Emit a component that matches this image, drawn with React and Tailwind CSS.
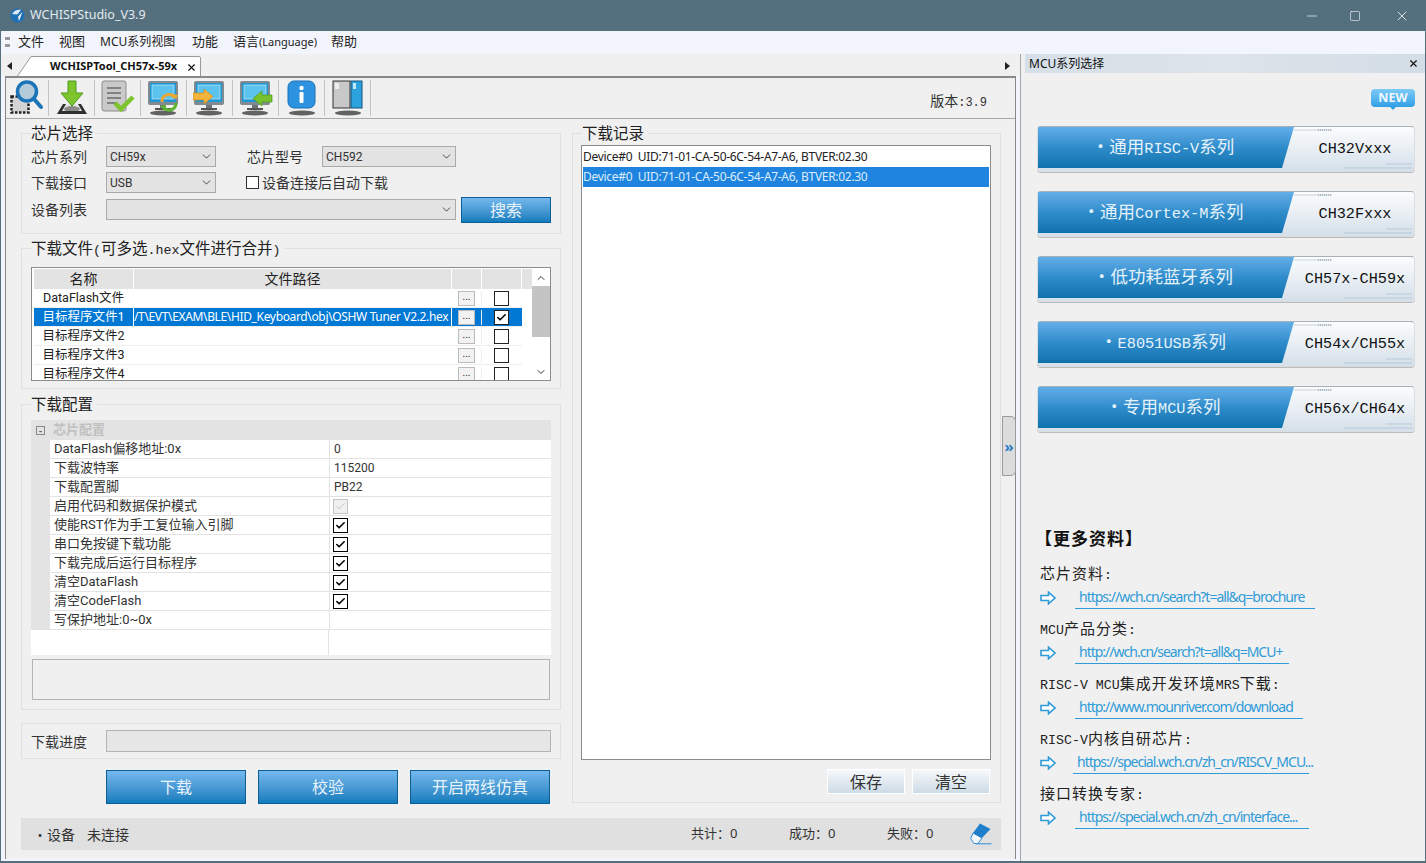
import { ChevronDown, ChevronUp, Check, X, Minus, Square } from "lucide-react";

const FONT = "[font-family:'Noto_Sans','Noto_Sans_CJK_SC',sans-serif]";
const MONO = "[font-family:'Liberation_Mono','Noto_Sans_CJK_SC',monospace]";
const GRID = "[font-family:'Roboto','Noto_Sans_CJK_SC',sans-serif]";

const menus = [
  { label: "文件", cls: "w-[41px] text-[13px]" },
  { label: "视图", cls: "w-[41px] text-[13px]" },
  { label: "MCU系列视图", cls: "w-[92px] text-[12px]" },
  { label: "功能", cls: "w-[41px] text-[13px]" },
];

const series = [
  { name: "通用RISC-V系列", code: "CH32Vxxx" },
  { name: "通用Cortex-M系列", code: "CH32Fxxx" },
  { name: "低功耗蓝牙系列", code: "CH57x-CH59x" },
  { name: "E8051USB系列", code: "CH54x/CH55x" },
  { name: "专用MCU系列", code: "CH56x/CH64x" },
];

const links = [
  { label: "芯片资料:", url: "https://wch.cn/search?t=all&q=brochure", w: "w-[240px]", ml: "ml-[19px]" },
  { label: "MCU产品分类:", url: "http://wch.cn/search?t=all&q=MCU+", w: "w-[214px]", ml: "ml-[19px]" },
  { label: "RISC-V MCU集成开发环境MRS下载:", url: "http://www.mounriver.com/download", w: "w-[228px]", ml: "ml-[19px]" },
  { label: "RISC-V内核自研芯片:", url: "https://special.wch.cn/zh_cn/RISCV_MCU...", w: "w-[236px]", ml: "ml-[17px]" },
  { label: "接口转换专家:", url: "https://special.wch.cn/zh_cn/interface...", w: "w-[234px]", ml: "ml-[19px]" },
];

const fileRows = [
  { name: "DataFlash文件", path: "" },
  { name: "目标程序文件1", path: "/T\\EVT\\EXAM\\BLE\\HID_Keyboard\\obj\\OSHW Tuner V2.2.hex", selected: true, checked: true },
  { name: "目标程序文件2", path: "" },
  { name: "目标程序文件3", path: "" },
  { name: "目标程序文件4", path: "" },
];

const configRows = [
  { name: "DataFlash偏移地址:0x", value: "0" },
  { name: "下载波特率", value: "115200" },
  { name: "下载配置脚", value: "PB22" },
  { name: "启用代码和数据保护模式", check: "disabled" },
  { name: "使能RST作为手工复位输入引脚", check: "on" },
  { name: "串口免按键下载功能", check: "on" },
  { name: "下载完成后运行目标程序", check: "on" },
  { name: "清空DataFlash", check: "on" },
  { name: "清空CodeFlash", check: "on" },
  { name: "写保护地址:0~0x", value: "" },
];

// the app draws latin in half-width mono next to the chinese, so split the runs
function Mixed({ text, latin }) {
  return text.split(/([\x20-\x7e]+)/).map((part, i) =>
    i % 2 === 1 ? <span key={i} className={`${MONO} ${latin}`}>{part}</span> : part
  );
}

function Group({ title, className, children }) {
  return (
    <div className={`relative border border-[#e0e0e0] ${className}`}>
      {title && (
        <span className="absolute left-[9px] top-[-10px] whitespace-pre bg-[#f0f0f0] pr-1 text-[15.5px] leading-[19px] text-[#222]">
          <Mixed text={title} latin="text-[13.3px]" />
        </span>
      )}
      {children}
    </div>
  );
}

function Select({ value, className }) {
  return (
    <div className={`flex h-[21px] items-center justify-between border border-[#a9a9a9] bg-[#e3e3e3] pl-[3px] pr-[2px] text-[12px] text-[#333] ${GRID} ${className}`}>
      <span>{value}</span>
      <ChevronDown size={13} strokeWidth={1.6} className="text-[#333]" />
    </div>
  );
}

function Checkbox({ checked, disabled, className = "" }) {
  return (
    <span className={`flex h-[15px] w-[15px] shrink-0 items-center justify-center border ${disabled ? "border-[#c4c4c4] bg-[#f0f0f0]" : "border-black bg-white"} ${className}`}>
      {checked && <Check size={11} strokeWidth={disabled ? 2 : 3.5} className={disabled ? "text-[#c0c0c0]" : "text-black"} />}
    </span>
  );
}

function BlueButton({ children, className }) {
  return (
    <button className={`border border-[#0b5f96] bg-gradient-to-b from-[#74b9ee] to-[#0f7cbc] text-[16px] text-[#e8f4fc] ${className}`}>
      {children}
    </button>
  );
}

function LightButton({ children }) {
  return (
    <button className="h-[25px] w-[78px] border border-white bg-gradient-to-b from-[#f6f8fa] to-[#cddbe6] text-[16px] text-[#333]">
      {children}
    </button>
  );
}

function Monitor({ children }) {
  return (
    <svg width="34" height="36" viewBox="0 0 34 36">
      <ellipse cx="16" cy="33" rx="13" ry="2.5" fill="#333" opacity=".75" />
      <rect x="1" y="1" width="30" height="24" rx="2" fill="#808a90" />
      <rect x="3" y="3" width="26" height="19" fill="#1f97d2" />
      <rect x="5" y="5" width="22" height="14" fill="#5cc3ee" stroke="#d8f2fc" strokeWidth=".6" />
      <rect x="13" y="25" width="6" height="3" fill="#6d7377" />
      <rect x="8" y="28" width="16" height="2" fill="#555" />
      {children}
    </svg>
  );
}

function ToolIcon({ type }) {
  if (type === "scan") {
    return (
      <svg width="34" height="36" viewBox="0 0 34 36">
        <rect x="1.5" y="16.5" width="17" height="16" fill="#d4d4d4" stroke="#222" strokeWidth="2.5" strokeDasharray="2.5 1.5" />
        <circle cx="17" cy="11.5" r="9.5" fill="#b4cbd9" stroke="#1b74b8" strokeWidth="3.5" />
        <path d="M24 19 L31 27" stroke="#1b74b8" strokeWidth="4" strokeLinecap="round" />
      </svg>
    );
  }
  if (type === "download") {
    return (
      <svg width="32" height="36" viewBox="0 0 32 36">
        <path d="M7 24 H25 L30 33 H2 Z" fill="#e8e8e8" />
        <ellipse cx="16" cy="29" rx="8" ry="3" fill="#8a8a8a" />
        <path d="M7 24 L1 34 H31 L25 24 H22 L26 31 H6 L10 24 Z" fill="#2f2f2f" />
        <path d="M12 1 H20 V13 H27 L16 26 L5 13 H12 Z" fill="#7cc52c" stroke="#4f9a1a" />
      </svg>
    );
  }
  if (type === "verify") {
    return (
      <svg width="34" height="36" viewBox="0 0 34 36">
        <rect x="1" y="1" width="24" height="30" rx="2" fill="#c9c9c9" stroke="#8d8d8d" />
        <path d="M6 8 H20 M6 13 H20 M6 18 H20 M6 23 H16" stroke="#6b6b6b" strokeWidth="1.5" />
        <path d="M14 23 L20 29 L32 17" fill="none" stroke="#7cc52c" strokeWidth="4.5" />
      </svg>
    );
  }
  if (type === "sync") {
    return (
      <Monitor>
        <path d="M15 22 A7 7 0 0 1 28 18" fill="none" stroke="#eda632" strokeWidth="3" />
        <path d="M29 23 A7 7 0 0 1 17 28" fill="none" stroke="#5cb531" strokeWidth="3" />
        <path d="M13 26 L18 31 L19 25 Z" fill="#5cb531" />
        <path d="M31 15 L26 14 L29 20 Z" fill="#eda632" />
      </Monitor>
    );
  }
  if (type === "in") {
    return (
      <Monitor>
        <path d="M0 13 H11 V9 L20 16.5 L11 24 V20 H0 Z" fill="#f3b43c" stroke="#c98a1c" strokeWidth=".7" />
      </Monitor>
    );
  }
  if (type === "out") {
    return (
      <Monitor>
        <path d="M33 15 H23 V11 L14 18.5 L23 26 V22 H33 Z" fill="#77c22c" stroke="#4f9a1a" strokeWidth=".7" />
      </Monitor>
    );
  }
  if (type === "info") {
    return (
      <svg width="30" height="36" viewBox="0 0 30 36">
        <ellipse cx="15" cy="33" rx="13" ry="2.5" fill="#333" opacity=".75" />
        <rect x="1" y="1" width="27" height="27" rx="6" fill="#2d93e0" stroke="#1a6fb3" />
        <circle cx="14.5" cy="8" r="2.2" fill="#fff" />
        <rect x="12.5" y="12" width="4" height="11" rx="1" fill="#fff" />
      </svg>
    );
  }
  return (
    <svg width="32" height="36" viewBox="0 0 32 36">
      <ellipse cx="16" cy="33" rx="13" ry="2.5" fill="#333" opacity=".75" />
      <rect x="1" y="1" width="17" height="27" fill="#c8c8c8" stroke="#333" />
      <rect x="3" y="3" width="4" height="6" fill="#eee" />
      <rect x="19" y="1" width="11" height="27" fill="#2ba2de" stroke="#17557f" />
      <rect x="21" y="3" width="3" height="6" fill="#bfe8fa" />
    </svg>
  );
}

function ArrowIcon() {
  return (
    <svg width="16" height="14" viewBox="0 0 16 14" className="mb-[4px] shrink-0">
      <path d="M1 4.5 H8.5 V1.2 L15 7 L8.5 12.8 V9.5 H1 Z" fill="#fff" stroke="#2f9bd8" strokeWidth="1.6" />
    </svg>
  );
}

function SeriesCard({ name, code }) {
  return (
    <div className="relative flex h-[46px] rounded-[4px] border border-[#d8dde2] border-t-[#a9b1b8] bg-gradient-to-b from-[#fbfcfd] to-[#d5e0ea] shadow-[0_1px_0_#bbb]">
      <div className="h-[41px] w-[256px] shrink-0 whitespace-nowrap bg-gradient-to-b from-[#62aee8] via-[#2f8ccb] to-[#0d72ad] pr-[6px] text-center [clip-path:polygon(0_0,100%_0,244px_100%,0_100%)]">
        <span className="text-[17.5px] leading-[38px] text-[#e6f3fb]">
          ・<Mixed text={name} latin="text-[15.3px]" />
        </span>
      </div>
      <div className={`flex-1 pl-[2px] pt-[10px] text-center text-[15.2px] leading-[24px] text-[#111] ${MONO}`}>{code}</div>
      {/* circuit traces printed on the white end of the button */}
      <svg width="120" height="44" viewBox="0 0 120 44" className="absolute right-0 top-0">
        <path d="M0 3 H38" stroke="#c6d3dd" />
        <path d="M24 3 H38" stroke="#aebcc8" strokeDasharray="1 1" strokeWidth="2" />
        <path d="M50 41 H118 M92 37 H118" stroke="#b5c9d8" />
      </svg>
    </div>
  );
}

export default function App() {
  return (
    <div className={`flex h-[863px] w-[1426px] flex-col overflow-hidden bg-[#54707f] text-[#222] ${FONT}`}>
      {/* title bar */}
      <div className="flex h-[31px] shrink-0 items-center pl-[10px] text-white">
        <svg width="15" height="15" viewBox="0 0 15 15">
          <circle cx="7.5" cy="7.5" r="7" fill="#1f6fb5" />
          <path d="M2 6 Q5 0.8 11 1.8 Q9 5 7 6.5 Z" fill="#dbe9f4" />
          <path d="M9.5 7 L12.5 4 L9 13 L8 9 Z" fill="#eef3f7" />
        </svg>
        <span className="ml-[5px] text-[12.5px] text-[#e4eaee]">WCHISPStudio_V3.9</span>
        <div className="ml-auto flex items-center text-white">
          <Minus size={16} strokeWidth={1} className="mr-[29px]" />
          <Square size={12} strokeWidth={1.2} className="mr-[33px]" />
          <X size={16} strokeWidth={1.2} className="mr-[16px]" />
        </div>
      </div>

      {/* menu bar */}
      <div className="mx-[1px] flex h-[23px] shrink-0 items-center bg-[#f3f5fc] pb-[1px] text-[#222]">
        <span className="ml-[4px] mr-[11px] h-[10px] w-[2px] border-y-[3px] border-dotted border-[#999]" />
        {menus.map((m) => (
          <span key={m.label} className={m.cls}>{m.label}</span>
        ))}
        <span className="w-[98px] text-[13px]">语言<span className="text-[11px]">(Language)</span></span>
        <span className="text-[13px]">帮助</span>
      </div>

      <div className="mx-[1px] mb-[2px] flex min-h-0 flex-1 bg-[#f3f5fc]">
        {/* left pane */}
        <div className="relative w-[1020px] shrink-0 border-r border-[#a0a7ad]">
          {/* tab strip */}
          <div className="flex h-[22px] items-end bg-[#f0f0f0] pl-[6px] pr-[10px]">
            <span className="mb-[6px] h-0 w-0 border-y-[4px] border-r-[5px] border-y-transparent border-r-[#222]" />
            <div className="relative ml-[5px] h-[20px] w-[184px]">
              <svg width="184" height="20" viewBox="0 0 184 20" className="absolute inset-0">
                <path d="M0.5 20 L14 0.5 H182 Q183.5 0.5 183.5 2 V20" fill="#fff" stroke="#999" />
              </svg>
              <span className="absolute left-[33px] top-[1px] text-[11px] font-bold leading-[17px] text-[#111]">WCHISPTool_CH57x-59x</span>
              <X size={11} strokeWidth={2.5} className="absolute left-[169px] top-[6px] text-[#111]" />
            </div>
            <span className="mb-[6px] ml-auto h-0 w-0 border-y-[4px] border-l-[5px] border-y-transparent border-l-[#222]" />
          </div>

          {/* tab content */}
          <div className="ml-[4px] mr-[4px] h-[783px] border-l border-r border-t-2 border-[#888] bg-[#f0f0f0]">
            <div className="flex h-[41px] items-center border-b border-[#a8a8a8]">
              {["scan", "download", "verify", "sync", "in", "out", "info", "panel"].map((t) => (
                <div key={t} className="flex h-[36px] w-[46px] items-center justify-center border-r border-[#c4c4c4] first:w-[43px] last:border-r-0">
                  <ToolIcon type={t} />
                </div>
              ))}
              <span className="ml-auto mr-[28px] mt-[6px] text-[14px] text-[#333]">
                <Mixed text="版本:3.9" latin="text-[12px]" />
              </span>
            </div>

            <div className="flex pl-[15px] pt-[14px]">
              {/* left column */}
              <div className="w-[540px] shrink-0">
                <Group title="芯片选择" className="h-[101px] px-[9px] pt-[12px]">
                  <div className="flex h-[21px] items-center text-[14px] text-[#333]">
                    <span className="w-[75px]">芯片系列</span>
                    <Select value="CH59x" className="w-[110px]" />
                    <span className="ml-[31px] w-[75px]">芯片型号</span>
                    <Select value="CH592" className="w-[134px]" />
                  </div>
                  <div className="mt-[5px] flex h-[21px] items-center text-[14px] text-[#333]">
                    <span className="w-[75px]">下载接口</span>
                    <Select value="USB" className="w-[110px]" />
                    <Checkbox className="ml-[30px] mr-[3px] !h-[13px] !w-[13px] !border-[#333]" />
                    <span>设备连接后自动下载</span>
                  </div>
                  <div className="mt-[6px] flex h-[21px] items-center text-[14px] text-[#333]">
                    <span className="w-[75px]">设备列表</span>
                    <Select value="" className="w-[350px]" />
                    <BlueButton className="ml-[5px] h-[26px] w-[90px]">搜索</BlueButton>
                  </div>
                </Group>

                <Group title="下载文件(可多选.hex文件进行合并)" className="mt-[14px] h-[141px] px-[9px] pt-[18px]">
                  <div className={`relative h-[114px] overflow-hidden border border-[#8c8c8c] bg-white pl-[2px] pt-[1px] text-[12.5px] text-[#222] ${GRID}`}>
                    <div className="flex h-[20px] w-[498px] items-center bg-[#e3e3e3] text-center text-[14px]">
                      <span className="w-[100px] border-r border-white">名称</span>
                      <span className="w-[318px] border-r border-white">文件路径</span>
                      <span className="h-full w-[30px] border-r border-white" />
                      <span className="h-full w-[40px] border-r border-white" />
                    </div>
                    {fileRows.map((r) => (
                      <div key={r.name} className={`flex h-[19px] w-[488px] shrink-0 items-center border-b border-[#eef0f0] text-center ${r.selected ? "bg-[#0078d4] text-white" : ""}`}>
                        <span className="w-[100px] whitespace-nowrap border-r border-white">{r.name}</span>
                        <span className={`w-[318px] whitespace-nowrap border-r border-white text-left text-[12px] tracking-[-0.35px] ${FONT}`}>{r.path || "\u00a0"}</span>
                        <span className="flex w-[30px] justify-center border-r border-[#eef0f0]">
                          <span className="flex h-[15px] w-[17px] items-center justify-center border border-[#bbb] bg-[#f2f2f2] pb-[3px] text-[10px] text-[#222]">...</span>
                        </span>
                        <span className="flex w-[38px] justify-center">
                          <Checkbox checked={r.checked} className="!border-[#222]" />
                        </span>
                      </div>
                    ))}
                    <div className="absolute right-0 top-[1px] flex h-[112px] w-[18px] flex-col items-center justify-between bg-white text-[#333]">
                      <ChevronUp size={12} strokeWidth={2} className="mt-[3px]" />
                      <span className="absolute top-[17px] h-[51px] w-full bg-[#c4c4c4]" />
                      <ChevronDown size={12} strokeWidth={2} className="mb-[3px]" />
                    </div>
                  </div>
                </Group>

                <Group title="下载配置" className="mt-[15px] h-[306px] px-[9px] pt-[15px]">
                  <div className="flex h-[20px] items-center bg-[#e3e3e3] text-[13px] font-bold text-[#c0c0c0]">
                    <span className="ml-[5px] mr-[5px] flex h-[9px] w-[9px] items-center justify-center border border-[#888] text-[9px] leading-none text-[#555]">-</span>
                    <span className="ml-[3px]">芯片配置</span>
                  </div>
                  {configRows.map((r) => (
                    <div key={r.name} className={`flex h-[19px] bg-white text-[13px] text-[#333] ${GRID}`}>
                      <span className="w-[19px] shrink-0 bg-[#e3e3e3]" />
                      <span className="flex w-[280px] items-center whitespace-nowrap border-b border-r border-[#e3e3e3] pl-[4px]">{r.name}</span>
                      <span className="flex flex-1 items-center border-b border-[#e3e3e3] pl-[4px] text-[12px]">
                        {r.check ? <Checkbox checked disabled={r.check === "disabled"} className="-ml-[1px]" /> : r.value}
                      </span>
                    </div>
                  ))}
                  <div className="flex h-[25px] bg-white">
                    <span className="h-full w-[298px] border-r border-[#e3e3e3]" />
                  </div>
                  <div className="mx-[1px] mt-[4px] h-[41px] border border-[#b4b4b4] bg-[#f0f0f0]" />
                </Group>

                <Group className="mt-[13px] flex h-[36px] items-center px-[9px] text-[14px] text-[#333]">
                  <span className="w-[75px]">下载进度</span>
                  <div className="h-[22px] flex-1 border border-[#b4b4b4] bg-[#e6e6e6]" />
                </Group>

                <div className="mt-[11px] flex gap-[12px] pl-[85px]">
                  <BlueButton className="h-[34px] w-[140px]">下载</BlueButton>
                  <BlueButton className="h-[34px] w-[140px]">校验</BlueButton>
                  <BlueButton className="h-[34px] w-[140px]">开启两线仿真</BlueButton>
                </div>
              </div>

              {/* right column */}
              <Group title="下载记录" className="ml-[11px] flex h-[670px] w-[429px] flex-col pl-[8px] pr-[9px] pt-[11px]">
                <div className="h-[615px] border border-[#8c8c8c] bg-white px-[1px] pt-[1px] text-[12px] tracking-[-0.3px] text-[#222]">
                  <div className="flex h-[20px] items-center whitespace-pre">Device#0  UID:71-01-CA-50-6C-54-A7-A6, BTVER:02.30</div>
                  <div className="flex h-[20px] items-center whitespace-pre bg-[#1e84e0] text-[#dcecfa]">Device#0  UID:71-01-CA-50-6C-54-A7-A6, BTVER:02.30</div>
                </div>
                <div className="mr-[1px] mt-[9px] flex justify-end gap-[7px]">
                  <LightButton>保存</LightButton>
                  <LightButton>清空</LightButton>
                </div>
              </Group>
            </div>

            {/* status bar */}
            <div className="ml-[15px] mt-[14px] flex h-[32px] w-[980px] items-center whitespace-nowrap bg-[#e0e0e0] text-[13px] text-[#333]">
              <span className="ml-[12px] w-[54px] text-[14px]">・设备</span>
              <span className="text-[14px]">未连接</span>
              <span className="ml-[562px] w-[98px]">共计：0</span>
              <span className="w-[98px]">成功：0</span>
              <span className="w-[83px]">失败：0</span>
              <svg width="22" height="22" viewBox="0 0 22 22">
                <path d="M3 10 L12 15 L8 20.5 H4 L0.7 15.5 Z" fill="#f4f8fb" stroke="#2b8fd8" />
                <path d="M10 0.5 L20.5 6 L12 15 L3 10 Z" fill="#1f7fcb" />
                <path d="M6 20.8 H21.5" stroke="#2b8fd8" />
              </svg>
            </div>
          </div>

          {/* collapse handle */}
          <div className="absolute right-[4px] top-[362px] flex h-[60px] w-[14px] items-center justify-center rounded-r-[5px] border border-[#9a9a9a] bg-[#dcdcdc] text-[15px] font-bold leading-none text-[#2b7fc4]">
            »
          </div>
        </div>

        {/* right pane */}
        <div className="flex-1 bg-[#f0f0f0] pl-[4px]">
          <div className="flex h-[19px] items-center justify-between bg-gradient-to-r from-[#d6dfe8] via-[#dde4ea] to-[#d3dde6] pl-[4px] pr-[6px] text-[12px] text-[#111]">
            <span>MCU系列选择</span>
            <X size={11} strokeWidth={2.5} />
          </div>

          <div className="pl-[12px] pr-[10px] pt-[16px]">
            <div className="flex justify-end">
              <span className="relative h-[18px] w-[44px] rounded-[4px] bg-gradient-to-b from-[#7ccbf6] to-[#2f9fe6] text-center text-[12.5px] font-bold leading-[18px] text-[#eef8fe]">
                NEW
                <span className="absolute left-[19px] top-[18px] h-0 w-0 border-x-[3px] border-t-[3px] border-x-transparent border-t-[#2f9fe6]" />
              </span>
            </div>
            <div className="mt-[19px] flex flex-col gap-[19px]">
              {series.map((s) => (
                <SeriesCard key={s.code} name={s.name} code={s.code} />
              ))}
            </div>

            <div className="mt-[96px] pl-[3px]">
              <div className="-ml-[5px] text-[17px] font-bold leading-[22px] tracking-[1px] text-[#111]">【更多资料】</div>
              <div className="mt-[12px]">
                {links.map((l) => (
                  <div key={l.url} className="h-[55px]">
                    <div className="whitespace-pre text-[15px] leading-[22px] tracking-[1px] text-[#222]">
                      <Mixed text={l.label} latin="text-[13.3px] tracking-[0px]" />
                    </div>
                    <div className="flex items-end">
                      <ArrowIcon />
                      <div className={`${l.ml} ${l.w} whitespace-nowrap border-b border-[#2f9bd8] pb-[1px] pl-[4px] text-[14px] leading-[20px] tracking-[-1px] text-[#2f9bd8]`}>{l.url}</div>
                    </div>
                  </div>
                ))}
              </div>
            </div>
          </div>
        </div>
      </div>
    </div>
  );
}
